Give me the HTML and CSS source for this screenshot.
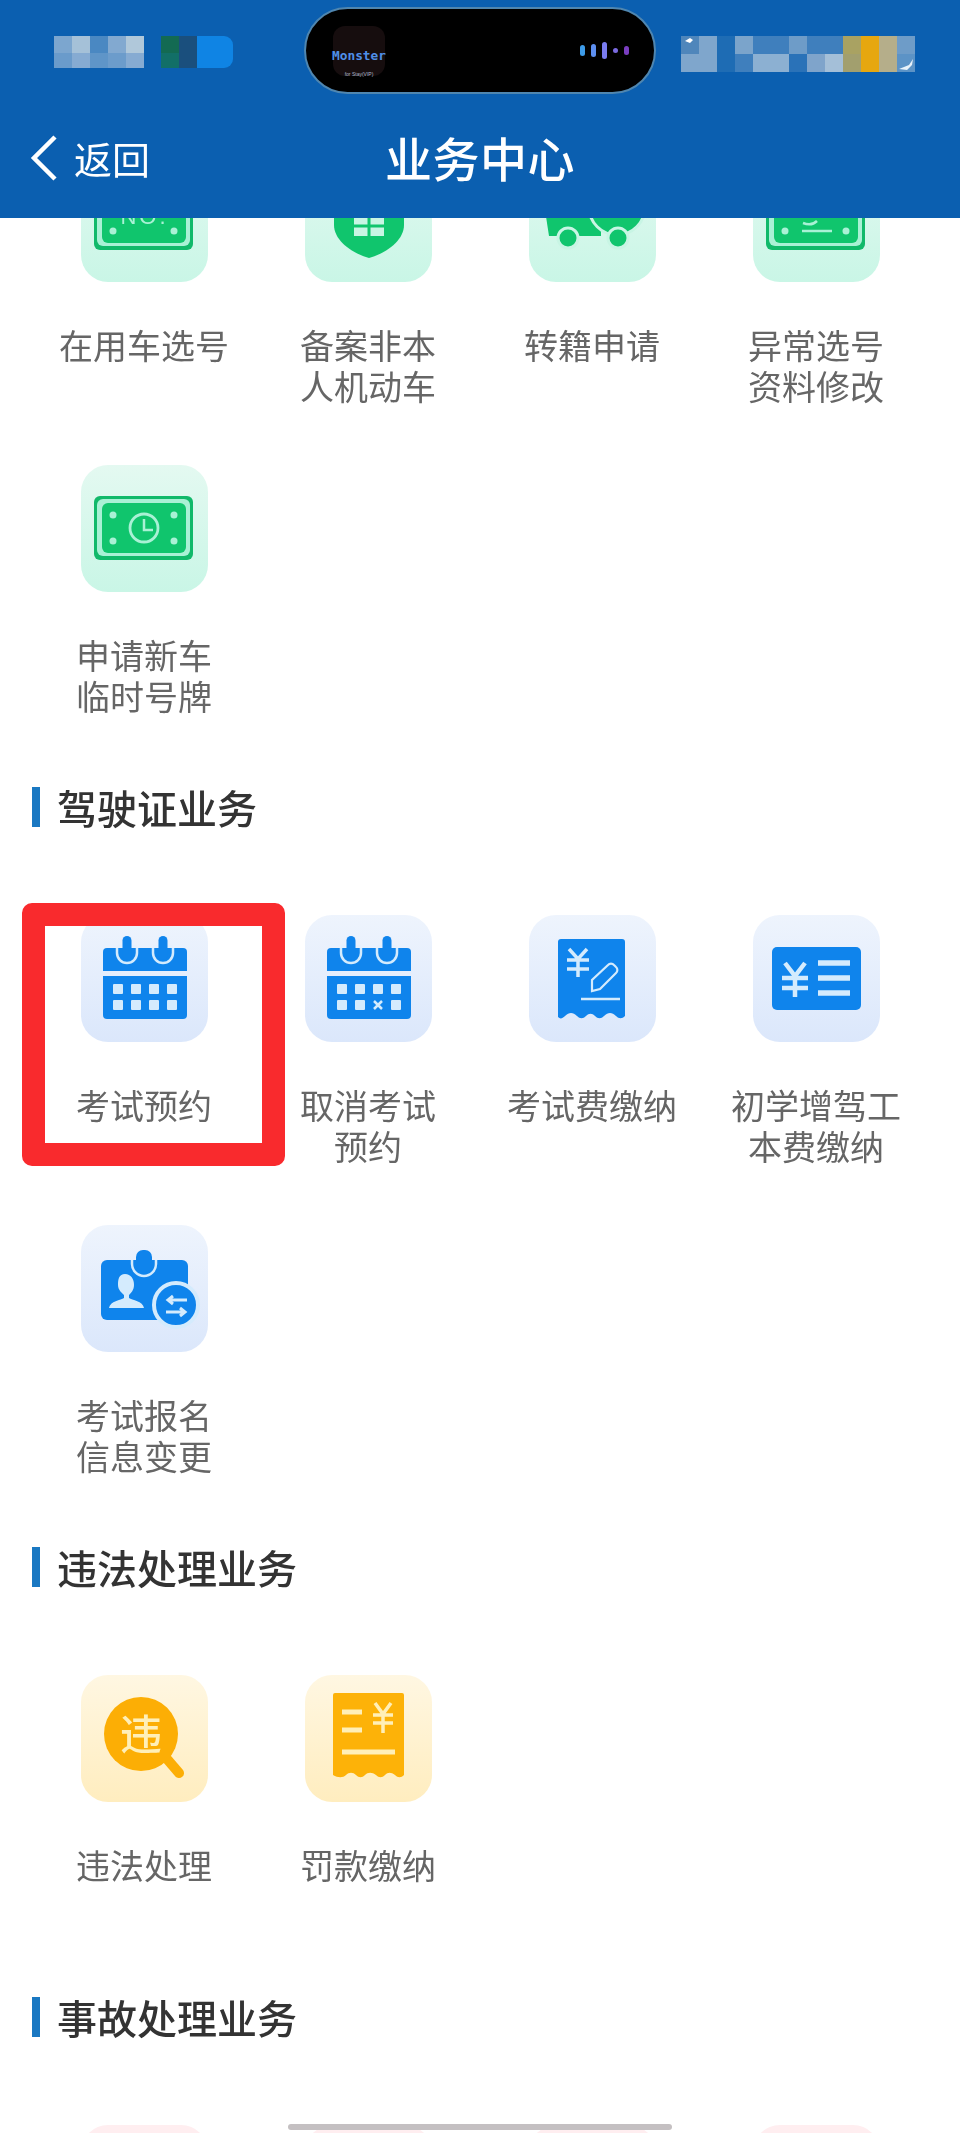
FILE: index.html
```html
<!DOCTYPE html>
<html lang="zh-CN">
<head>
  <meta charset="UTF-8">
  <title>业务中心</title>
  <meta name="viewport" content="width=device-width, initial-scale=1.0">
  <link rel="stylesheet" href="styles.css">
</head>
<body>
  <svg class="defs" width="0" height="0">
    <symbol id="plate" viewBox="0 0 127 127">
      <rect x="13" y="31" width="99" height="64" rx="6" fill="#11b96a"/>
      <rect x="16" y="34" width="93" height="57" rx="6" fill="#a9f1d5"/>
      <rect x="21" y="38" width="84" height="50" rx="6" fill="#10c56d"/>
      <circle cx="32" cy="50" r="3.5" fill="#a9f1d5"/>
      <circle cx="93" cy="50" r="3.5" fill="#a9f1d5"/>
      <circle cx="32" cy="76" r="3.5" fill="#a9f1d5"/>
      <circle cx="93" cy="76" r="3.5" fill="#a9f1d5"/>
    </symbol>
    <symbol id="calendar" viewBox="0 0 127 127">
      <path d="M22 37a4 4 0 0 1 4-4h76a4 4 0 0 1 4 4v19H22z" fill="#0f84ec"/>
      <path d="M22 61h84v39a4 4 0 0 1-4 4H26a4 4 0 0 1-4-4z" fill="#0f84ec"/>
      <path d="M36 33v5a10 10 0 0 0 20 0v-5M72 33v5a10 10 0 0 0 20 0v-5" fill="#0f84ec" stroke="#d4ebfd" stroke-width="2.5"/>
      <path d="M36 30h20v3H36zM72 30h20v3H72z" fill="#e6f0fd"/>
      <rect x="41.500" y="21" width="9" height="24" rx="4.500" fill="#0f84ec"/>
      <rect x="77.500" y="21" width="9" height="24" rx="4.500" fill="#0f84ec"/>
      <g fill="#d4ebfd">
        <rect x="32" y="69" width="10" height="10" rx="1"/>
        <rect x="50" y="69" width="10" height="10" rx="1"/>
        <rect x="68" y="69" width="10" height="10" rx="1"/>
        <rect x="86" y="69" width="10" height="10" rx="1"/>
        <rect x="32" y="85" width="10" height="10" rx="1"/>
        <rect x="50" y="85" width="10" height="10" rx="1"/>
        <rect x="86" y="85" width="10" height="10" rx="1"/>
      </g>
    </symbol>
  </svg>

  <div class="page">
    <header class="topbar">
      <div class="status">
        <svg class="mosaic mosaic-left" width="179" height="32" viewBox="0 0 179 32">
          <rect x="0" width="18" height="17" fill="#7ca6cf"/>
          <rect x="18" width="18" height="17" fill="#a5c1d8"/>
          <rect x="36" width="18" height="17" fill="#4a88c2"/>
          <rect x="54" width="18" height="17" fill="#82a9d0"/>
          <rect x="72" width="18" height="17" fill="#b0c8da"/>
          <rect x="0" y="17" width="18" height="15" fill="#6a9bcb"/>
          <rect x="18" y="17" width="18" height="15" fill="#86abd2"/>
          <rect x="36" y="17" width="18" height="15" fill="#5f95c8"/>
          <rect x="54" y="17" width="18" height="15" fill="#6c9ccb"/>
          <rect x="72" y="17" width="18" height="15" fill="#86abd2"/>
          <rect x="107" width="18" height="17" fill="#136a52"/>
          <rect x="107" y="17" width="18" height="15" fill="#126f67"/>
          <rect x="125" width="18" height="32" fill="#1a4f7d"/>
          <path d="M143 0h27a9 9 0 0 1 9 9v14a9 9 0 0 1-9 9h-27z" fill="#0f84e4"/>
        </svg>
        <div class="island">
          <div class="album">
            <span class="album-name">Monster</span>
            <span class="album-sub">for Stay(VIP)</span>
          </div>
          <div class="wave">
            <i class="wave-bar wave-a"></i>
            <i class="wave-bar wave-b"></i>
            <i class="wave-bar wave-c"></i>
            <i class="wave-bar wave-d"></i>
            <i class="wave-bar wave-e"></i>
          </div>
        </div>
        <svg class="mosaic mosaic-right" width="234" height="36" viewBox="0 0 234 36">
          <rect x="0" width="18" height="18" fill="#4f86bb"/>
          <rect x="18" width="18" height="18" fill="#7fa6cc"/>
          <rect x="36" width="18" height="36" fill="#1e6cb4"/>
          <rect x="54" width="18" height="18" fill="#7ba4cb"/>
          <rect x="72" width="36" height="18" fill="#3f7fbd"/>
          <rect x="108" width="18" height="18" fill="#6e9cc8"/>
          <rect x="126" width="36" height="18" fill="#3f7fbd"/>
          <rect x="162" width="18" height="18" fill="#a9a262"/>
          <rect x="180" width="18" height="36" fill="#e6a70f"/>
          <rect x="198" width="18" height="36" fill="#b5ae8a"/>
          <rect x="216" width="18" height="18" fill="#6e9cc8"/>
          <rect x="0" y="18" width="36" height="18" fill="#7fa6cc"/>
          <rect x="54" y="18" width="18" height="18" fill="#3f7fbd"/>
          <rect x="72" y="18" width="36" height="18" fill="#8cb0d2"/>
          <rect x="108" y="18" width="18" height="18" fill="#2a72b8"/>
          <rect x="126" y="18" width="18" height="18" fill="#7fa4cb"/>
          <rect x="144" y="18" width="18" height="18" fill="#a4bfd8"/>
          <rect x="162" y="18" width="18" height="18" fill="#a29f6e"/>
          <rect x="216" y="18" width="18" height="18" fill="#5c93c6"/>
          <path d="M4 5l5-3 3 2-3 3z" fill="#fff"/>
          <path d="M218 33l10-4 4-6-1 6-5 5z" fill="#e8f2fa"/>
        </svg>
      </div>
      <nav class="navbar">
        <a class="back">
          <svg width="30" height="48" viewBox="0 0 30 48"><path d="M25 3L4 24l21 21" fill="none" stroke="#fff" stroke-width="4.500"/></svg>
          <span>返回</span>
        </a>
        <h1>业务中心</h1>
      </nav>
    </header>

    <main class="content">
      <section>
        <div class="grid">
          <div class="item">
            <div class="tile green">
              <svg viewBox="0 0 127 127">
                <use href="#plate"/>
                <text class="plate-text" x="63.500" y="69">NO.</text>
              </svg>
            </div>
            <p class="label">在用车选号</p>
          </div>
          <div class="item">
            <div class="tile green">
              <svg viewBox="0 0 127 127">
                <path d="M29 30h70v40c0 15-17 28-35 33-18-5-35-18-35-33z" fill="#10c56d"/>
                <rect x="49" y="48" width="30" height="33" fill="#c8f5e4"/>
                <path d="M49 61h30M49 71h30M64 48v33" stroke="#10c56d" stroke-width="3"/>
              </svg>
            </div>
            <p class="label">备案非本<br>人机动车</p>
          </div>
          <div class="item">
            <div class="tile green">
              <svg viewBox="0 0 127 127">
                <path d="M14 42h58v39H20z" fill="#10c56d"/>
                <circle cx="88" cy="52" r="28" fill="#10c56d" stroke="#c8f5e4" stroke-width="3"/>
                <circle cx="39" cy="83" r="10" fill="#10c56d" stroke="#c8f5e4" stroke-width="3"/>
                <circle cx="89" cy="83" r="10" fill="#10c56d" stroke="#c8f5e4" stroke-width="3"/>
              </svg>
            </div>
            <p class="label">转籍申请</p>
          </div>
          <div class="item">
            <div class="tile green">
              <svg viewBox="0 0 127 127">
                <use href="#plate"/>
                <path d="M49 76h30" stroke="#a9f1d5" stroke-width="2.500"/>
                <path d="M50 68c5 2 10 2 14-2" fill="none" stroke="#a9f1d5" stroke-width="2.500"/>
              </svg>
            </div>
            <p class="label">异常选号<br>资料修改</p>
          </div>
          <div class="item">
            <div class="tile green">
              <svg viewBox="0 0 127 127">
                <use href="#plate"/>
                <circle cx="63" cy="63" r="14" fill="none" stroke="#a9f1d5" stroke-width="2.800"/>
                <path d="M63 54v11h9" fill="none" stroke="#a9f1d5" stroke-width="2.500"/>
              </svg>
            </div>
            <p class="label">申请新车<br>临时号牌</p>
          </div>
        </div>
      </section>

      <section>
        <h2>驾驶证业务</h2>
        <div class="grid">
          <div class="item">
            <div class="tile blue">
              <svg viewBox="0 0 127 127">
                <use href="#calendar"/>
                <rect x="68" y="85" width="10" height="10" rx="1" fill="#d4ebfd"/>
              </svg>
            </div>
            <p class="label">考试预约</p>
            <div class="highlight"></div>
          </div>
          <div class="item">
            <div class="tile blue">
              <svg viewBox="0 0 127 127">
                <use href="#calendar"/>
                <path d="M69 86l8 8M77 86l-8 8" stroke="#d4ebfd" stroke-width="2.500"/>
              </svg>
            </div>
            <p class="label">取消考试<br>预约</p>
          </div>
          <div class="item">
            <div class="tile blue">
              <svg viewBox="0 0 127 127">
                <path d="M29 27a3 3 0 0 1 3-3h61a3 3 0 0 1 3 3v74c-3 3-6 3-9 0-4-4-8-4-12 0-3 3-6 3-9 0-3-3-6-3-9 0-3 3-6 3-9 0-4-4-8-4-12 0-3 3-5 3-7 1z" fill="#0f84ec"/>
                <path d="M40 34l9 10 9-10M38 45h22M38 54h22M49 44v18" fill="none" stroke="#d4ebfd" stroke-width="3.500"/>
                <path d="M63 76V65l16-15a4 4 0 0 1 6 0l2 2a4 4 0 0 1 0 6L71 74z" fill="none" stroke="#d4ebfd" stroke-width="2.200"/>
                <path d="M52 84h39" stroke="#d4ebfd" stroke-width="2.500"/>
              </svg>
            </div>
            <p class="label">考试费缴纳</p>
          </div>
          <div class="item">
            <div class="tile blue">
              <svg viewBox="0 0 127 127">
                <rect x="19" y="32" width="89" height="63" rx="5" fill="#0f84ec"/>
                <path d="M32 48l10 13 10-13M29 63h26M29 73h26M42 61v21" fill="none" stroke="#d4ebfd" stroke-width="4.500"/>
                <path d="M65 48h32M65 63h32M65 78h32" stroke="#d4ebfd" stroke-width="5.500"/>
              </svg>
            </div>
            <p class="label">初学增驾工<br>本费缴纳</p>
          </div>
          <div class="item">
            <div class="tile blue">
              <svg viewBox="0 0 127 127">
                <rect x="20" y="35" width="87" height="60" rx="6" fill="#0f84ec"/>
                <path d="M51 35v4a12 12 0 0 0 24 0v-4" fill="#0f84ec" stroke="#d4ebfd" stroke-width="2.500"/>
                <rect x="55" y="25" width="16" height="22" rx="7" fill="#0f84ec"/>
                <path d="M44 49c6 0 9 5 9 11 0 5-3 8-5 10v3c3 2 14 3 15 10H28c1-7 12-8 15-10v-3c-2-2-6-5-6-10 0-6 1-11 7-11z" fill="#d4ebfd"/>
                <circle cx="95" cy="80" r="22" fill="#0f84ec" stroke="#d4ebfd" stroke-width="4"/>
                <path d="M106 75H88M92 71l-5 4 5 4M85 87h18M99 83l5 4-5 4" fill="none" stroke="#d4ebfd" stroke-width="3"/>
              </svg>
            </div>
            <p class="label">考试报名<br>信息变更</p>
          </div>
        </div>
      </section>

      <section>
        <h2>违法处理业务</h2>
        <div class="grid">
          <div class="item">
            <div class="tile yellow">
              <svg viewBox="0 0 127 127">
                <path d="M86 84l12 14" stroke="#fcae05" stroke-width="10" stroke-linecap="round"/>
                <circle cx="60" cy="59" r="37" fill="#fcae05"/>
                <text class="glyph-text" x="60" y="75">违</text>
              </svg>
            </div>
            <p class="label">违法处理</p>
          </div>
          <div class="item">
            <div class="tile yellow">
              <svg viewBox="0 0 127 127">
                <path d="M28 20a2 2 0 0 1 2-2h67a2 2 0 0 1 2 2v80c-3 3-6 3-9 0-4-3-7-3-10 0-3 3-6 3-9 0-4-3-8-3-11 0-3 3-6 3-9 0-3-3-7-3-10 0-3 3-8 3-13 0z" fill="#fdb208"/>
                <path d="M37 37h20M37 55h20M37 77h53" stroke="#ffefb8" stroke-width="5"/>
                <path d="M70 28l8 11 8-11M68 40h20M68 48h20M78 39v19" fill="none" stroke="#ffefb8" stroke-width="3.500"/>
              </svg>
            </div>
            <p class="label">罚款缴纳</p>
          </div>
        </div>
      </section>

      <section>
        <h2>事故处理业务</h2>
        <div class="grid">
          <div class="item"><div class="tile pink"></div></div>
          <div class="item"><div class="tile pink"></div></div>
          <div class="item"><div class="tile pink"></div></div>
          <div class="item"><div class="tile pink"></div></div>
        </div>
      </section>
    </main>

    <div class="home-bar"></div>
  </div>
</body>
</html>
```

FILE: styles.css
```css
* {
  box-sizing: border-box;
}

body {
  margin: 0;
  background: #fff;
  font-family: "Noto Sans CJK SC", "Noto Sans", sans-serif;
}

.defs {
  position: absolute;
}

/* the screenshot is a soft, recompressed photo */
.page {
  position: relative;
  height: 2133px;
  overflow: hidden;
  filter: blur(0.5px);
}

/* top blue bar, sits over the scrolled list */
.topbar {
  position: relative;
  z-index: 2;
  height: 218px;
  background: #0b5fb0;
  color: #fff;
}

.status {
  display: flex;
  align-items: flex-start;
  height: 102px;
  padding: 7px 0 0 54px;
}

.mosaic {
  flex: none;
  margin-top: 29px;
}

.island {
  flex: none;
  display: flex;
  align-items: center;
  justify-content: space-between;
  width: 352px;
  height: 87px;
  margin: 0 25px 0 71px;
  padding: 0 25px 0 27px;
  background: #000;
  border: 2px solid #4f86b0;
  border-radius: 44px;
}

.album {
  display: flex;
  flex-direction: column;
  align-items: center;
  justify-content: flex-end;
  width: 52px;
  height: 50px;
  background: #160d0e;
  border-radius: 12px;
  white-space: nowrap;
}

.album-name {
  font-family: "DejaVu Sans Mono", monospace;
  font-size: 12.800px;
  font-weight: bold;
  line-height: 14px;
  margin-bottom: 8px;
  color: #4f8fe8;
}

.album-sub {
  font-family: "Liberation Sans", sans-serif;
  font-size: 5px;
  line-height: 6px;
  margin-bottom: -1px;
  color: #a9b6c8;
}

.wave {
  display: flex;
  align-items: center;
  gap: 6px;
}

.wave-bar {
  width: 5px;
  border-radius: 3px;
}

.wave-a { height: 11px; background: #3d9be8; }
.wave-b { height: 13px; background: #5d8ff0; }
.wave-c { height: 17px; background: #7a7cf0; }
.wave-d { height: 5px; background: #7a6ae0; }
.wave-e { height: 9px; background: #7a3ec0; }

.navbar {
  position: relative;
  display: flex;
  align-items: center;
  justify-content: center;
  height: 116px;
  padding-bottom: 6px;
}

.back {
  position: absolute;
  left: 30px;
  top: 32px;
  display: flex;
  align-items: center;
  gap: 14px;
  font-size: 38px;
  line-height: 48px;
}

.navbar h1 {
  margin: 0;
  font-size: 47px;
  font-weight: 500;
  line-height: 56px;
  letter-spacing: 0.500px;
}

/* list is scrolled, first row is partly hidden under the bar */
.content {
  margin-top: -63px;
  padding: 0 32px;
}

h2 {
  margin: 68px 0 88px;
  padding-left: 17px;
  border-left: 8px solid #1a78c2;
  font-size: 40px;
  font-weight: 500;
  line-height: 40px;
  color: #333;
}

.grid {
  display: grid;
  grid-template-columns: repeat(4, 224px);
  row-gap: 56px;
}

.item {
  position: relative;
  display: flex;
  flex-direction: column;
  align-items: center;
}

.tile {
  width: 127px;
  height: 127px;
  border-radius: 27px;
}

.tile svg {
  display: block;
  width: 127px;
  height: 127px;
}

.green { background: linear-gradient(#e4f9f1, #c9f6e6); }
.blue { background: linear-gradient(#eef4fd, #dbe7fb); }
.yellow { background: linear-gradient(#fff7e2, #ffedbf); }
.pink { background: #ffeef0; }

.label {
  width: 100%;
  height: 85px;
  margin: 42px 0 0;
  font-size: 34px;
  line-height: 41px;
  text-align: center;
  color: #666;
}

.plate-text {
  font-family: "Liberation Sans", sans-serif;
  font-size: 22px;
  letter-spacing: 3px;
  text-anchor: middle;
  fill: #a9f1d5;
}

.glyph-text {
  font-size: 42px;
  font-weight: 500;
  text-anchor: middle;
  fill: #ffefb8;
}

.highlight {
  position: absolute;
  top: -12px;
  bottom: 3px;
  left: -10px;
  right: -29px;
  border: 23px solid #f92a2d;
  border-radius: 10px;
}

.home-bar {
  position: absolute;
  left: 288px;
  bottom: 3px;
  width: 384px;
  height: 6px;
  background: #c4c0c2;
  border-radius: 3px;
}
```
